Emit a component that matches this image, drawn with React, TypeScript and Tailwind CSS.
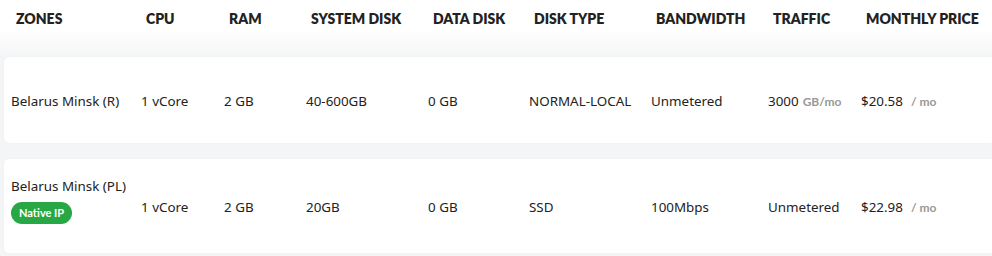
// @ts-nocheck
const cols = ["w-[130px]", "w-[83px]", "w-[82px]", "w-[122px]", "w-[101px]", "w-[122px]", "w-[117px]", "w-[93px]", "flex-1"];
const headers = ["ZONES", "CPU", "RAM", "SYSTEM DISK", "DATA DISK", "DISK TYPE", "BANDWIDTH", "TRAFFIC", "MONTHLY PRICE"];

const rows = [
  { zone: "Belarus Minsk (R)", native: false, cpu: "1 vCore", ram: "2 GB", sys: "40-600GB", data: "0 GB", type: "NORMAL-LOCAL", bw: "Unmetered", traffic: "3000", unit: true, price: "$20.58", h: "h-[86px] pt-[3px]" },
  { zone: "Belarus Minsk (PL)", native: true, cpu: "1 vCore", ram: "2 GB", sys: "20GB", data: "0 GB", type: "SSD", bw: "100Mbps", traffic: "Unmetered", unit: false, price: "$22.98", h: "h-[94px] pt-[2px]" },
];

function App() {
  return (
    <div className="w-[992px] h-[256px] overflow-hidden bg-[#f4f5f6] text-[#222]" style={{ fontFamily: "'Noto Sans', sans-serif" }}>
      <div className="h-[57px] bg-gradient-to-b from-white from-50% to-[#f4f5f6]">
        <div className="flex h-[36px] items-center pl-[9px] text-[14px] font-extrabold text-[#222]" style={{ fontFamily: "Lato, sans-serif" }}>
          {headers.map((h, i) => (
            <div key={h} className={`${cols[i]} pl-[7px] shrink-0`}>{h}</div>
          ))}
        </div>
      </div>
      <div className="flex flex-col gap-[16px] pl-[4px]">
        {rows.map((r) => (
          <div key={r.zone} className={`${r.h} flex items-center bg-white rounded-l-[5px] pl-[7px] text-[13.4px] shadow-[0_0_3px_rgba(0,0,0,0.03)]`}>
            <div className={`${cols[0]} shrink-0 flex flex-col items-start gap-[5px] ${r.native ? "mb-[14px]" : ""}`}>
              <span>{r.zone}</span>
              {r.native && (
                <span className="rounded-full bg-[#28a745] px-[8px] py-[3px] text-[11px] font-bold leading-[16px] text-white" style={{ fontFamily: "Lato, sans-serif" }}>Native IP</span>
              )}
            </div>
            <div className={`${cols[1]} shrink-0`}>{r.cpu}</div>
            <div className={`${cols[2]} shrink-0`}>{r.ram}</div>
            <div className={`${cols[3]} shrink-0`}>{r.sys}</div>
            <div className={`${cols[4]} shrink-0`}>{r.data}</div>
            <div className={`${cols[5]} shrink-0`}>{r.type}</div>
            <div className={`${cols[6]} shrink-0`}>{r.bw}</div>
            <div className={`${cols[7]} shrink-0`}>
              {r.traffic}
              {r.unit && <span className="ml-[4px] text-[12px] font-bold text-[#999]" style={{ fontFamily: "Lato, sans-serif" }}>GB/mo</span>}
            </div>
            <div className={`${cols[8]}`}>
              {r.price}
              <span className="ml-[8px] text-[12px] font-bold text-[#999]" style={{ fontFamily: "Lato, sans-serif" }}>/ mo</span>
            </div>
          </div>
        ))}
      </div>
    </div>
  );
}

export default App;
